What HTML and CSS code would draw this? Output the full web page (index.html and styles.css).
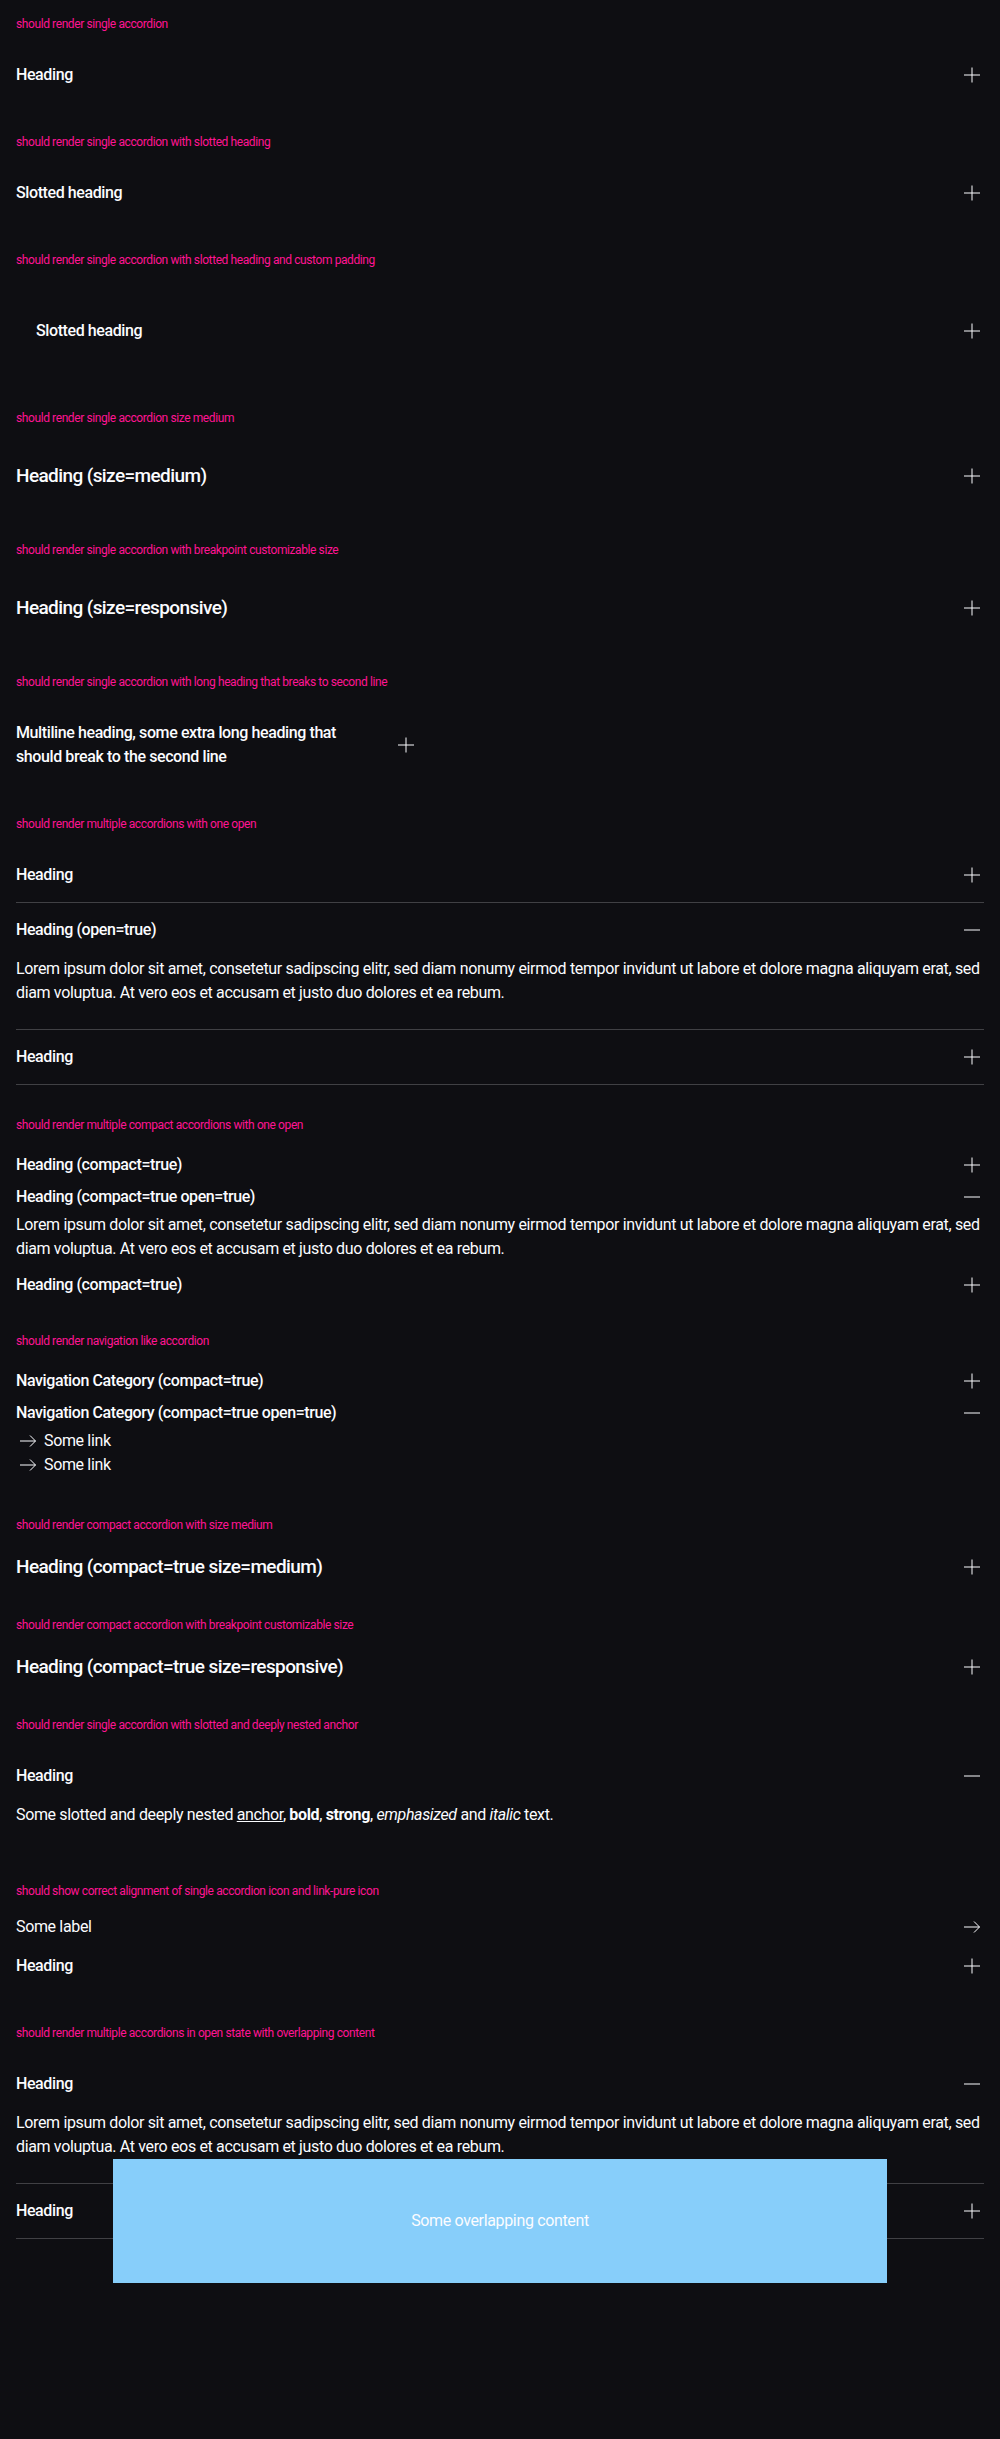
FILE: index.html
```
<!DOCTYPE html>
<html lang="en">
<head>
<meta charset="utf-8">
<title>Accordion</title>
<link rel="stylesheet" href="styles.css">
</head>
<body>

<div class="playground">
  <p class="title">should render single accordion</p>
  <div class="accordion">
    <div class="acc-head"><span class="acc-text">Heading</span><svg class="icon" viewBox="0 0 24 24"><path d="M4 12h16M12 4.5v15"/></svg></div>
  </div>
</div>

<div class="playground">
  <p class="title">should render single accordion with slotted heading</p>
  <div class="accordion">
    <div class="acc-head"><span class="acc-text">Slotted heading</span><svg class="icon" viewBox="0 0 24 24"><path d="M4 12h16M12 4.5v15"/></svg></div>
  </div>
</div>

<div class="playground">
  <p class="title">should render single accordion with slotted heading and custom padding</p>
  <div class="accordion custom">
    <div class="acc-head"><span class="acc-text">Slotted heading</span><svg class="icon" viewBox="0 0 24 24"><path d="M4 12h16M12 4.5v15"/></svg></div>
  </div>
</div>

<div class="playground">
  <p class="title">should render single accordion size medium</p>
  <div class="accordion medium">
    <div class="acc-head"><span class="acc-text">Heading (size=medium)</span><svg class="icon" viewBox="0 0 24 24"><path d="M4 12h16M12 4.5v15"/></svg></div>
  </div>
</div>

<div class="playground">
  <p class="title">should render single accordion with breakpoint customizable size</p>
  <div class="accordion medium">
    <div class="acc-head"><span class="acc-text">Heading (size=responsive)</span><svg class="icon" viewBox="0 0 24 24"><path d="M4 12h16M12 4.5v15"/></svg></div>
  </div>
</div>

<div class="playground">
  <p class="title">should render single accordion with long heading that breaks to second line</p>
  <div class="accordion narrow">
    <div class="acc-head"><span class="acc-text">Multiline heading, some extra long heading that should break to the second line</span><svg class="icon" viewBox="0 0 24 24"><path d="M4 12h16M12 4.5v15"/></svg></div>
  </div>
</div>

<div class="playground">
  <p class="title">should render multiple accordions with one open</p>
  <div class="accordion bordered">
    <div class="acc-head"><span class="acc-text">Heading</span><svg class="icon" viewBox="0 0 24 24"><path d="M4 12h16M12 4.5v15"/></svg></div>
  </div>
  <div class="accordion bordered">
    <div class="acc-head"><span class="acc-text">Heading (open=true)</span><svg class="icon" viewBox="0 0 24 24"><path d="M4 12h16"/></svg></div>
    <div class="acc-body">Lorem ipsum dolor sit amet, consetetur sadipscing elitr, sed diam nonumy eirmod tempor invidunt ut labore et dolore magna aliquyam erat, sed diam voluptua. At vero eos et accusam et justo duo dolores et ea rebum.</div>
  </div>
  <div class="accordion bordered">
    <div class="acc-head"><span class="acc-text">Heading</span><svg class="icon" viewBox="0 0 24 24"><path d="M4 12h16M12 4.5v15"/></svg></div>
  </div>
</div>

<div class="playground">
  <p class="title">should render multiple compact accordions with one open</p>
  <div class="accordion compact">
    <div class="acc-head"><span class="acc-text">Heading (compact=true)</span><svg class="icon" viewBox="0 0 24 24"><path d="M4 12h16M12 4.5v15"/></svg></div>
  </div>
  <div class="accordion compact">
    <div class="acc-head"><span class="acc-text">Heading (compact=true open=true)</span><svg class="icon" viewBox="0 0 24 24"><path d="M4 12h16"/></svg></div>
    <div class="acc-body">Lorem ipsum dolor sit amet, consetetur sadipscing elitr, sed diam nonumy eirmod tempor invidunt ut labore et dolore magna aliquyam erat, sed diam voluptua. At vero eos et accusam et justo duo dolores et ea rebum.</div>
  </div>
  <div class="accordion compact">
    <div class="acc-head"><span class="acc-text">Heading (compact=true)</span><svg class="icon" viewBox="0 0 24 24"><path d="M4 12h16M12 4.5v15"/></svg></div>
  </div>
</div>

<div class="playground">
  <p class="title">should render navigation like accordion</p>
  <div class="accordion compact">
    <div class="acc-head"><span class="acc-text">Navigation Category (compact=true)</span><svg class="icon" viewBox="0 0 24 24"><path d="M4 12h16M12 4.5v15"/></svg></div>
  </div>
  <div class="accordion compact">
    <div class="acc-head"><span class="acc-text">Navigation Category (compact=true open=true)</span><svg class="icon" viewBox="0 0 24 24"><path d="M4 12h16"/></svg></div>
    <div class="acc-body">
      <a class="link-pure" href="#"><svg class="icon" viewBox="0 0 24 24"><path d="M4 12h15.5M14 6.5l5.5 5.5-5.5 5.5"/></svg><span>Some link</span></a>
      <a class="link-pure" href="#"><svg class="icon" viewBox="0 0 24 24"><path d="M4 12h15.5M14 6.5l5.5 5.5-5.5 5.5"/></svg><span>Some link</span></a>
    </div>
  </div>
</div>

<div class="playground">
  <p class="title">should render compact accordion with size medium</p>
  <div class="accordion compact medium">
    <div class="acc-head"><span class="acc-text">Heading (compact=true size=medium)</span><svg class="icon" viewBox="0 0 24 24"><path d="M4 12h16M12 4.5v15"/></svg></div>
  </div>
</div>

<div class="playground">
  <p class="title">should render compact accordion with breakpoint customizable size</p>
  <div class="accordion compact medium">
    <div class="acc-head"><span class="acc-text">Heading (compact=true size=responsive)</span><svg class="icon" viewBox="0 0 24 24"><path d="M4 12h16M12 4.5v15"/></svg></div>
  </div>
</div>

<div class="playground">
  <p class="title">should render single accordion with slotted and deeply nested anchor</p>
  <div class="accordion">
    <div class="acc-head"><span class="acc-text">Heading</span><svg class="icon" viewBox="0 0 24 24"><path d="M4 12h16"/></svg></div>
    <div class="acc-body">Some slotted and deeply nested <a href="#">anchor</a>, <b>bold</b>, <strong>strong</strong>, <em>emphasized</em> and <i>italic</i> text.</div>
  </div>
</div>

<div class="playground">
  <p class="title">should show correct alignment of single accordion icon and link-pure icon</p>
  <a class="link-pure stretch" href="#"><span>Some label</span><svg class="icon" viewBox="0 0 24 24"><path d="M4 12h15.5M14 6.5l5.5 5.5-5.5 5.5"/></svg></a>
  <div class="accordion">
    <div class="acc-head"><span class="acc-text">Heading</span><svg class="icon" viewBox="0 0 24 24"><path d="M4 12h16M12 4.5v15"/></svg></div>
  </div>
</div>

<div class="playground">
  <p class="title">should render multiple accordions in open state with overlapping content</p>
  <div class="accordion bordered">
    <div class="acc-head"><span class="acc-text">Heading</span><svg class="icon" viewBox="0 0 24 24"><path d="M4 12h16"/></svg></div>
    <div class="acc-body">Lorem ipsum dolor sit amet, consetetur sadipscing elitr, sed diam nonumy eirmod tempor invidunt ut labore et dolore magna aliquyam erat, sed diam voluptua. At vero eos et accusam et justo duo dolores et ea rebum.
      <div class="overlap-anchor"><div class="overlap">Some overlapping content</div></div>
    </div>
  </div>
  <div class="accordion bordered">
    <div class="acc-head"><span class="acc-text">Heading</span><svg class="icon" viewBox="0 0 24 24"><path d="M4 12h16M12 4.5v15"/></svg></div>
  </div>
</div>

</body>
</html>
```
FILE: styles.css
```
html {
  background: #0e0e12;
}

body {
  margin: 0;
  min-height: 2439px;
  color: #fbfcff;
  font-family: Roboto, "Liberation Sans", sans-serif;
  font-size: 16px;
  line-height: 24px;
  letter-spacing: -0.35px;
}

.playground {
  padding: 16px;
}

.title {
  margin: 0 0 16px;
  font-size: 12px;
  line-height: 16px;
  letter-spacing: -0.4px;
  color: #ff1493;
}

.accordion.bordered {
  border-bottom: 1px solid #404044;
}

.acc-head {
  display: flex;
  align-items: center;
  justify-content: space-between;
  gap: 24px;
  padding: 15px 0;
  font-size: 16px;
  line-height: 24px;
  font-weight: 500;
  letter-spacing: -0.4px;
}

.acc-text {
  flex: 1 1 auto;
}

.custom .acc-text {
  padding: 20px;
}

.narrow {
  width: 402px;
}

.medium .acc-head {
  font-size: 19px;
  line-height: 28px;
  padding: 20px 0;
  letter-spacing: -0.6px;
}

.compact .acc-head,
.compact.medium .acc-head {
  padding: 4px 0;
}

.icon {
  flex: 0 0 24px;
  width: 24px;
  height: 24px;
  fill: none;
  stroke: #fbfcff;
  stroke-width: 1;
}

.acc-body {
  padding-bottom: 24px;
}

.compact .acc-body {
  padding-bottom: 8px;
}

.acc-body a {
  color: inherit;
}

.acc-body b,
.acc-body strong {
  font-weight: 700;
}

.link-pure {
  display: flex;
  align-items: center;
  gap: 4px;
  color: #fbfcff;
  text-decoration: none;
  font-size: 16px;
  line-height: 24px;
}

.link-pure.stretch {
  justify-content: space-between;
}

.overlap-anchor {
  position: relative;
  height: 0;
}

.overlap {
  position: absolute;
  top: 0;
  left: 10%;
  width: 80%;
  height: 124px;
  z-index: 2;
  display: flex;
  align-items: center;
  justify-content: center;
  background: #87cefa;
  color: #fbfcff;
}
```
